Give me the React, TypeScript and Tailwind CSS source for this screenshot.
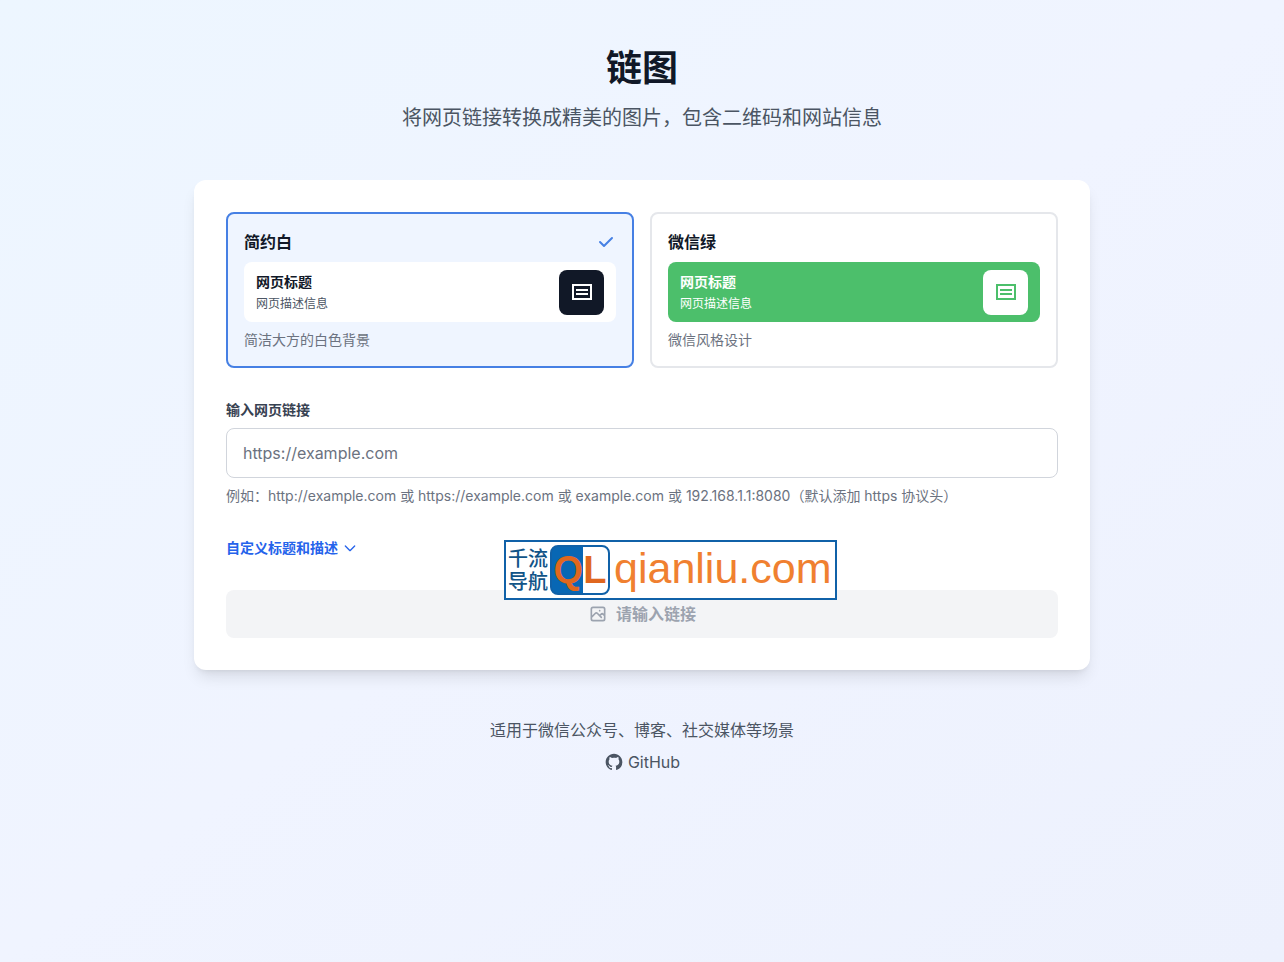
import { useState } from "react";

const themes = [
  {
    id: "white",
    name: "简约白",
    description: "简洁大方的白色背景",
    preview: "bg-white",
    title: "text-[#111827]",
    text: "text-[#4b5563]",
    icon: "bg-[#111827] text-white",
  },
  {
    id: "green",
    name: "微信绿",
    description: "微信风格设计",
    preview: "bg-[#4cbf6b]",
    title: "text-white",
    text: "text-white",
    icon: "bg-white text-[#4cbf6b]",
  },
];

function CheckIcon() {
  return (
    <svg className="w-5 h-5 text-[#4680e4]" viewBox="0 0 20 20" fill="currentColor" aria-hidden="true">
      <path
        fillRule="evenodd"
        clipRule="evenodd"
        d="M16.707 5.293a1 1 0 010 1.414l-8 8a1 1 0 01-1.414 0l-4-4a1 1 0 011.414-1.414L8 12.586l7.293-7.293a1 1 0 011.414 0z"
      />
    </svg>
  );
}

function PageIcon() {
  return (
    <svg className="w-6 h-6" viewBox="0 0 24 24" fill="none" stroke="currentColor" strokeWidth="2" aria-hidden="true">
      <path d="M3 5h18v14H3zM6 10h12M6 14h12" />
    </svg>
  );
}

function ImageIcon() {
  return (
    <svg
      className="w-5 h-5"
      viewBox="0 0 24 24"
      fill="none"
      stroke="currentColor"
      strokeWidth="2"
      strokeLinecap="round"
      strokeLinejoin="round"
      aria-hidden="true"
    >
      <path d="M4 16l4.586-4.586a2 2 0 012.828 0L16 16m-2-2l1.586-1.586a2 2 0 012.828 0L20 14m-6-6h.01M6 20h12a2 2 0 002-2V6a2 2 0 00-2-2H6a2 2 0 00-2 2v12a2 2 0 002 2z" />
    </svg>
  );
}

function GitHubIcon() {
  return (
    <svg className="w-5 h-5" viewBox="0 0 24 24" fill="currentColor" aria-hidden="true">
      <path
        fillRule="evenodd"
        clipRule="evenodd"
        d="M12 2C6.477 2 2 6.484 2 12.017c0 4.425 2.865 8.18 6.839 9.504.5.092.682-.217.682-.483 0-.237-.008-.868-.013-1.703-2.782.605-3.369-1.343-3.369-1.343-.454-1.158-1.11-1.466-1.11-1.466-.908-.62.069-.608.069-.608 1.003.07 1.531 1.032 1.531 1.032.892 1.53 2.341 1.088 2.91.832.092-.647.35-1.088.636-1.338-2.22-.253-4.555-1.113-4.555-4.951 0-1.093.39-1.988 1.029-2.688-.103-.253-.446-1.272.098-2.65 0 0 .84-.27 2.75 1.026A9.564 9.564 0 0112 6.844c.85.004 1.705.115 2.504.337 1.909-1.296 2.747-1.027 2.747-1.027.546 1.379.202 2.398.1 2.651.64.7 1.028 1.595 1.028 2.688 0 3.848-2.339 4.695-4.566 4.943.359.309.678.92.678 1.855 0 1.338-.012 2.419-.012 2.747 0 .268.18.58.688.482A10.019 10.019 0 0022 12.017C22 6.484 17.522 2 12 2z"
      />
    </svg>
  );
}

// Directory badge floating over the form
function DirectoryBadge() {
  return (
    <div className="absolute left-[310px] top-[360px] flex h-[60px] w-[333px] items-center gap-[2px] border-2 border-[#1061a8] bg-white px-[2px] whitespace-nowrap">
      <span className="w-10 shrink-0 pt-[2px] text-xl leading-[23px] font-medium text-[#115488]">
        千流
        <br />
        导航
      </span>
      <span className="flex h-[50px] w-[60px] shrink-0 items-center justify-center rounded-lg border-2 border-[#1061a8] bg-linear-to-r from-[#0867b4] from-55% to-white to-55% font-['Liberation_Sans',sans-serif] text-[38px] leading-none font-bold text-[#e0671f]">
        QL
      </span>
      <span className="pb-1 pl-[2px] font-['Liberation_Sans',sans-serif] text-[43px] leading-none text-[#f08030]">
        qianliu.com
      </span>
    </div>
  );
}

export default function App() {
  const [theme, setTheme] = useState("white");
  const [url, setUrl] = useState("");
  const [open, setOpen] = useState(false);

  return (
    <div className="min-h-screen bg-linear-to-br from-[#edf6ff] via-[#f0f4ff] to-[#edf1fd] px-4 py-12 font-['Inter','Noto_Sans_CJK_SC',sans-serif]">
      <div className="mx-auto max-w-4xl">
        {/* Header */}
        <header className="mb-12 text-center">
          <h1 className="mb-4 text-4xl font-bold text-[#111827]">链图</h1>
          <p className="text-xl text-[#4b5563]">将网页链接转换成精美的图片，包含二维码和网站信息</p>
        </header>

        <main className="relative rounded-xl bg-white p-8 shadow-lg">
          {/* Themes */}
          <div className="mb-8 grid grid-cols-2 gap-4">
            {themes.map((item) => (
              <button
                key={item.id}
                type="button"
                aria-pressed={theme === item.id}
                onClick={() => setTheme(item.id)}
                className={`rounded-lg border-2 p-4 text-left ${
                  theme === item.id ? "border-[#4680e4] bg-[#eff5ff]" : "border-gray-200 bg-white"
                }`}
              >
                <div className="mb-2 flex h-6 items-center justify-between">
                  <span className="font-semibold text-[#111827]">{item.name}</span>
                  {theme === item.id && <CheckIcon />}
                </div>
                <div className={`mb-2 flex h-[60px] items-center justify-between rounded-lg px-3 ${item.preview}`}>
                  <div>
                    <div className={`mb-1 text-sm font-bold ${item.title}`}>网页标题</div>
                    <div className={`text-xs ${item.text}`}>网页描述信息</div>
                  </div>
                  <div className={`flex h-[45px] w-[45px] items-center justify-center rounded-lg ${item.icon}`}>
                    <PageIcon />
                  </div>
                </div>
                <p className="text-sm text-[#6b7280]">{item.description}</p>
              </button>
            ))}
          </div>

          {/* Link */}
          <div className="mb-8">
            <label htmlFor="url" className="mb-2 block text-sm font-semibold text-[#374151]">
              输入网页链接
            </label>
            <input
              id="url"
              type="text"
              value={url}
              onChange={(e) => setUrl(e.target.value)}
              placeholder="https://example.com"
              className="block w-full rounded-lg border border-gray-300 px-4 py-3 text-base text-[#111827] placeholder:text-[#6b7280]"
            />
            <p className="mt-2 text-sm text-[#6b7280]">
              例如：http://example.com 或 https://example.com 或 example.com 或 192.168.1.1:8080（默认添加 https 协议头）
            </p>
          </div>

          <button
            type="button"
            aria-expanded={open}
            onClick={() => setOpen(!open)}
            className="mb-8 flex items-center gap-1 text-sm font-semibold text-[#2563eb]"
          >
            自定义标题和描述
            <svg
              className="w-4 h-4"
              viewBox="0 0 24 24"
              fill="none"
              stroke="currentColor"
              strokeWidth="2"
              strokeLinecap="round"
              strokeLinejoin="round"
              aria-hidden="true"
            >
              <path d="M19 9l-7 7-7-7" />
            </svg>
          </button>

          <button
            type="button"
            disabled={!url}
            className="flex w-full items-center justify-center gap-2 rounded-lg bg-gray-100 px-4 py-3 font-semibold text-[#9ca3af]"
          >
            <ImageIcon />
            请输入链接
          </button>

          <DirectoryBadge />
        </main>

        {/* Footer */}
        <footer className="mt-12 text-center text-[#4b5563]">
          <p>适用于微信公众号、博客、社交媒体等场景</p>
          <a href="https://github.com" className="mt-2 inline-flex items-center gap-1">
            <GitHubIcon />
            GitHub
          </a>
        </footer>
      </div>
    </div>
  );
}
